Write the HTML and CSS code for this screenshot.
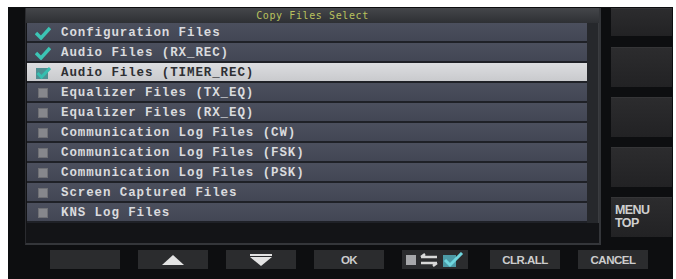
FILE: index.html
```html
<!DOCTYPE html>
<html>
<head>
<meta charset="utf-8">
<link rel="stylesheet" href="styles.css">
</head>
<body>
<div class="screen">
  <div class="top">
    <div class="panel">
      <div class="title">Copy Files Select</div>
      <div class="body">
        <div class="list">
          <div class="row"><span class="ico"><svg width="16" height="14" viewBox="0 0 16 14"><path d="M1 7 L6 12 L15 2" fill="none" stroke="#3cc4b4" stroke-width="3.4"/></svg></span><span class="lbl">Configuration Files</span></div>
          <div class="row"><span class="ico"><svg width="16" height="14" viewBox="0 0 16 14"><path d="M1 7 L6 12 L15 2" fill="none" stroke="#3cc4b4" stroke-width="3.4"/></svg></span><span class="lbl">Audio Files (RX_REC)</span></div>
          <div class="row sel"><span class="ico"><svg width="16" height="14" viewBox="0 0 16 14"><rect x="1" y="2" width="12" height="11" fill="#4f8f92"/><path d="M2.5 7 L6.5 11 L15 2" fill="none" stroke="#36bfb0" stroke-width="3"/></svg></span><span class="lbl">Audio Files (TIMER_REC)</span></div>
          <div class="row"><span class="ico"><span class="box"></span></span><span class="lbl">Equalizer Files (TX_EQ)</span></div>
          <div class="row"><span class="ico"><span class="box"></span></span><span class="lbl">Equalizer Files (RX_EQ)</span></div>
          <div class="row"><span class="ico"><span class="box"></span></span><span class="lbl">Communication Log Files (CW)</span></div>
          <div class="row"><span class="ico"><span class="box"></span></span><span class="lbl">Communication Log Files (FSK)</span></div>
          <div class="row"><span class="ico"><span class="box"></span></span><span class="lbl">Communication Log Files (PSK)</span></div>
          <div class="row"><span class="ico"><span class="box"></span></span><span class="lbl">Screen Captured Files</span></div>
          <div class="row"><span class="ico"><span class="box"></span></span><span class="lbl">KNS Log Files</span></div>
        </div>
        <div class="scroll"></div>
      </div>
    </div>
    <div class="side">
      <div class="sbtn first"></div>
      <div class="sbtn"></div>
      <div class="sbtn"></div>
      <div class="sbtn"></div>
      <div class="sbtn menu">MENU<br>TOP</div>
    </div>
  </div>
  <div class="bottom">
    <div class="btn"></div>
    <div class="btn"><svg width="22" height="10" viewBox="0 0 22 10"><path d="M11 0 L22 10 L0 10 Z" fill="#e4e4e4"/></svg></div>
    <div class="btn"><svg width="22" height="12" viewBox="0 0 22 12"><rect x="0" y="0" width="22" height="2" fill="#e4e4e4"/><path d="M0 3 L22 3 L11 12 Z" fill="#e4e4e4"/></svg></div>
    <div class="btn">OK</div>
    <div class="btn icons"><span class="box2"></span><svg width="20" height="14" viewBox="0 0 20 14"><path d="M2 4 L18 4 M2 4 L6 1 M18 10 L2 10 M18 10 L14 13" fill="none" stroke="#d8d8d8" stroke-width="2.4"/></svg><svg width="22" height="16" viewBox="0 0 22 16"><rect x="1" y="3" width="13" height="12" fill="#4c9aa6"/><path d="M3 8 L8 13 L20 1" fill="none" stroke="#6fd6de" stroke-width="3"/></svg></div>
    <div class="btn">CLR.ALL</div>
    <div class="btn">CANCEL</div>
  </div>
</div>
</body>
</html>
```
FILE: styles.css
```css
html, body {
  margin: 0;
  padding: 0;
  background: #ffffff;
}
.screen {
  margin: 7px 0 0 8px;
  width: 665px;
  height: 272px;
  background: #0d0e10;
  padding: 1px 0 0 17px;
  box-sizing: border-box;
  display: flex;
  flex-direction: column;
}
.top {
  display: flex;
  gap: 10px;
}
.panel {
  width: 576px;
  height: 237px;
  box-sizing: border-box;
  background: #131417;
  border-right: 2px solid #34363a;
  border-bottom: 2px solid #34363a;
  border-left: 1px solid #2a2b2f;
  display: flex;
  flex-direction: column;
}
.title {
  height: 15px;
  line-height: 15px;
  background: linear-gradient(#44464a, #2e3034);
  color: #b9c25e;
  font-family: "DejaVu Sans Mono", monospace;
  font-size: 10px;
  letter-spacing: 0.6px;
  text-align: center;
}
.body {
  display: flex;
  padding-left: 1px;
}
.list {
  width: 560px;
  display: flex;
  flex-direction: column;
}
.row {
  height: 20px;
  box-sizing: border-box;
  border-bottom: 2px solid #1f2127;
  background: linear-gradient(#4b4f5d, #424654);
  display: flex;
  align-items: center;
  padding: 2px 0 0 8px;
  gap: 10px;
  color: #dadbde;
  font-family: "Liberation Mono", monospace;
  font-weight: bold;
  font-size: 12.5px;
  letter-spacing: 0.9px;
  white-space: pre;
}
.row.sel {
  background: linear-gradient(#dcdde0, #c9cacd);
  color: #2e2f33;
}
.ico {
  width: 16px;
  height: 14px;
  display: flex;
  align-items: center;
  justify-content: center;
}
.box {
  width: 10px;
  height: 10px;
  background: #86878c;
  box-shadow: inset 0 0 0 1px #6f7075;
}
.scroll {
  width: 11px;
  height: 200px;
  background: #26282c;
  border-right: 1px solid #3a3c40;
}
.side {
  width: 61px;
  display: flex;
  flex-direction: column;
  gap: 10px;
}
.sbtn {
  height: 40px;
  background: linear-gradient(#2c2c2e, #222224);
  border-top: 1px solid #353537;
  box-sizing: border-box;
}
.sbtn.first {
  height: 28px;
  margin-bottom: 1px;
}
.menu {
  color: #cfcfcf;
  font-family: "Liberation Sans", Arial, sans-serif;
  font-weight: bold;
  font-size: 12.5px;
  line-height: 13px;
  padding: 6px 0 0 4px;
  letter-spacing: -0.6px;
}
.bottom {
  display: flex;
  gap: 18px;
  margin-top: 5px;
  padding-left: 25px;
}
.btn {
  width: 70px;
  height: 19px;
  background: #2b2c2e;
  color: #cdcdcd;
  font-family: "Liberation Sans", Arial, sans-serif;
  font-weight: bold;
  font-size: 11.5px;
  letter-spacing: -0.5px;
  display: flex;
  align-items: center;
  justify-content: center;
}
.btn.icons {
  gap: 3px;
  width: 66px;
  margin-right: 4px;
}
.box2 {
  width: 10px;
  height: 10px;
  background: #a6a7aa;
}
```
